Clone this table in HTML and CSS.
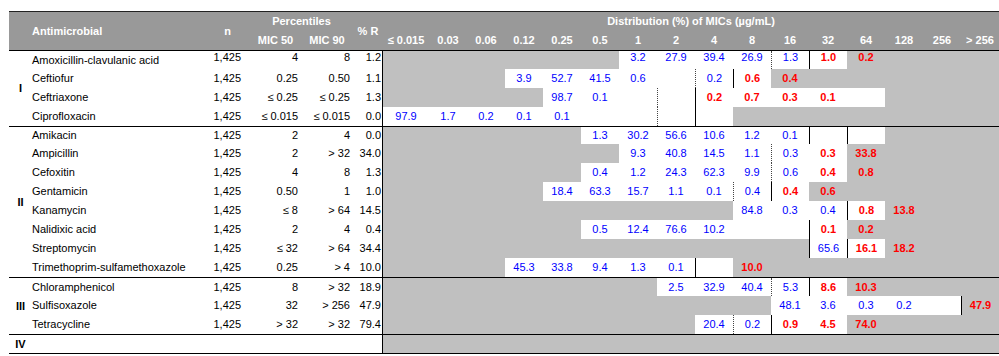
FILE: index.html
```html
<!DOCTYPE html>
<html lang="en">
<head>
<meta charset="utf-8">
<title>Distribution of MICs</title>
<link rel="stylesheet" href="styles.css">
</head>
<body>
<div class="table">
  <div class="head">
    <div class="hc h-grp"></div>
    <div class="hc h-anti">Antimicrobial</div>
    <div class="hc h-n">n</div>
    <div class="hc h-pct">Percentiles</div>
    <div class="hc h-r">% R</div>
    <div class="hc h-dist">Distribution (%) of MICs (µg/mL)</div>
    <div class="hc h-m50">MIC 50</div>
    <div class="hc h-m90">MIC 90</div>
    <div class="hc h-c0">≤ 0.015</div>
    <div class="hc">0.03</div>
    <div class="hc">0.06</div>
    <div class="hc">0.12</div>
    <div class="hc">0.25</div>
    <div class="hc">0.5</div>
    <div class="hc">1</div>
    <div class="hc">2</div>
    <div class="hc">4</div>
    <div class="hc">8</div>
    <div class="hc">16</div>
    <div class="hc">32</div>
    <div class="hc">64</div>
    <div class="hc">128</div>
    <div class="hc">256</div>
    <div class="hc">&gt; 256</div>
  </div>

  <div class="sec">
    <div class="grp">I</div>
    <div class="rows">
      <div class="row h18 top">
        <span class="name">Amoxicillin-clavulanic acid</span><span class="num n">1,425</span><span class="num m50">4</span><span class="num m90">8</span><span class="num pr">1.2</span>
        <span class="d s6"></span><span class="d w">3.2</span><span class="d w">27.9</span><span class="d w">39.4</span><span class="d w">26.9</span><span class="d w dl">1.3</span><span class="d w sl r">1.0</span><span class="d r">0.2</span><span class="d s3"></span>
      </div>
      <div class="row">
        <span class="name">Ceftiofur</span><span class="num n">1,425</span><span class="num m50">0.25</span><span class="num m90">0.50</span><span class="num pr">1.1</span>
        <span class="d s3"></span><span class="d w">3.9</span><span class="d w">52.7</span><span class="d w">41.5</span><span class="d w">0.6</span><span class="d w"></span><span class="d w dl">0.2</span><span class="d w sl r">0.6</span><span class="d r">0.4</span><span class="d s5"></span>
      </div>
      <div class="row">
        <span class="name">Ceftriaxone</span><span class="num n">1,425</span><span class="num m50">≤ 0.25</span><span class="num m90">≤ 0.25</span><span class="num pr">1.3</span>
        <span class="d s4"></span><span class="d w">98.7</span><span class="d w">0.1</span><span class="d w"></span><span class="d w dl"></span><span class="d w sl r">0.2</span><span class="d w r">0.7</span><span class="d w r">0.3</span><span class="d w r">0.1</span><span class="d w"></span><span class="d s3"></span>
      </div>
      <div class="row">
        <span class="name">Ciprofloxacin</span><span class="num n">1,425</span><span class="num m50">≤ 0.015</span><span class="num m90">≤ 0.015</span><span class="num pr">0.0</span>
        <span class="d w">97.9</span><span class="d w">1.7</span><span class="d w">0.2</span><span class="d w">0.1</span><span class="d w">0.1</span><span class="d w"></span><span class="d w"></span><span class="d w dl"></span><span class="d w sl"></span><span class="d s7"></span>
      </div>
    </div>
  </div>

  <div class="sec">
    <div class="grp">II</div>
    <div class="rows">
      <div class="row h17">
        <span class="name">Amikacin</span><span class="num n">1,425</span><span class="num m50">2</span><span class="num m90">4</span><span class="num pr">0.0</span>
        <span class="d s5"></span><span class="d w">1.3</span><span class="d w">30.2</span><span class="d w">56.6</span><span class="d w">10.6</span><span class="d w">1.2</span><span class="d w">0.1</span><span class="d w sl"></span><span class="d w sl"></span><span class="d s3"></span>
      </div>
      <div class="row">
        <span class="name">Ampicillin</span><span class="num n">1,425</span><span class="num m50">2</span><span class="num m90">&gt; 32</span><span class="num pr">34.0</span>
        <span class="d s6"></span><span class="d w">9.3</span><span class="d w">40.8</span><span class="d w">14.5</span><span class="d w">1.1</span><span class="d w dl">0.3</span><span class="d w r">0.3</span><span class="d r">33.8</span><span class="d s3"></span>
      </div>
      <div class="row">
        <span class="name">Cefoxitin</span><span class="num n">1,425</span><span class="num m50">4</span><span class="num m90">8</span><span class="num pr">1.3</span>
        <span class="d s5"></span><span class="d w">0.4</span><span class="d w">1.2</span><span class="d w">24.3</span><span class="d w">62.3</span><span class="d w">9.9</span><span class="d w dl">0.6</span><span class="d w r">0.4</span><span class="d r">0.8</span><span class="d s3"></span>
      </div>
      <div class="row">
        <span class="name">Gentamicin</span><span class="num n">1,425</span><span class="num m50">0.50</span><span class="num m90">1</span><span class="num pr">1.0</span>
        <span class="d s4"></span><span class="d w">18.4</span><span class="d w">63.3</span><span class="d w">15.7</span><span class="d w">1.1</span><span class="d w">0.1</span><span class="d w dl">0.4</span><span class="d w sl r">0.4</span><span class="d r">0.6</span><span class="d s4"></span>
      </div>
      <div class="row">
        <span class="name">Kanamycin</span><span class="num n">1,425</span><span class="num m50">≤ 8</span><span class="num m90">&gt; 64</span><span class="num pr">14.5</span>
        <span class="d s9"></span><span class="d w">84.8</span><span class="d w">0.3</span><span class="d w">0.4</span><span class="d w sl r">0.8</span><span class="d r">13.8</span><span class="d s2"></span>
      </div>
      <div class="row">
        <span class="name">Nalidixic acid</span><span class="num n">1,425</span><span class="num m50">2</span><span class="num m90">4</span><span class="num pr">0.4</span>
        <span class="d s5"></span><span class="d w">0.5</span><span class="d w">12.4</span><span class="d w">76.6</span><span class="d w">10.2</span><span class="d w"></span><span class="d w"></span><span class="d w sl r">0.1</span><span class="d r">0.2</span><span class="d s3"></span>
      </div>
      <div class="row">
        <span class="name">Streptomycin</span><span class="num n">1,425</span><span class="num m50">≤ 32</span><span class="num m90">&gt; 64</span><span class="num pr">34.4</span>
        <span class="d s11"></span><span class="d w sl">65.6</span><span class="d w sl r">16.1</span><span class="d r">18.2</span><span class="d s2"></span>
      </div>
      <div class="row">
        <span class="name">Trimethoprim-sulfamethoxazole</span><span class="num n">1,425</span><span class="num m50">0.25</span><span class="num m90">&gt; 4</span><span class="num pr">10.0</span>
        <span class="d s3"></span><span class="d w">45.3</span><span class="d w">33.8</span><span class="d w">9.4</span><span class="d w">1.3</span><span class="d w">0.1</span><span class="d w sl"></span><span class="d r">10.0</span><span class="d s6"></span>
      </div>
    </div>
  </div>

  <div class="sec">
    <div class="grp">III</div>
    <div class="rows">
      <div class="row h18">
        <span class="name">Chloramphenicol</span><span class="num n">1,425</span><span class="num m50">8</span><span class="num m90">&gt; 32</span><span class="num pr">18.9</span>
        <span class="d s7"></span><span class="d w">2.5</span><span class="d w">32.9</span><span class="d w">40.4</span><span class="d w dl">5.3</span><span class="d w sl r">8.6</span><span class="d r">10.3</span><span class="d s3"></span>
      </div>
      <div class="row">
        <span class="name">Sulfisoxazole</span><span class="num n">1,425</span><span class="num m50">32</span><span class="num m90">&gt; 256</span><span class="num pr">47.9</span>
        <span class="d s10"></span><span class="d w">48.1</span><span class="d w">3.6</span><span class="d w">0.3</span><span class="d w">0.2</span><span class="d w"></span><span class="d sl r">47.9</span>
      </div>
      <div class="row">
        <span class="name">Tetracycline</span><span class="num n">1,425</span><span class="num m50">&gt; 32</span><span class="num m90">&gt; 32</span><span class="num pr">79.4</span>
        <span class="d s8"></span><span class="d w">20.4</span><span class="d w dl">0.2</span><span class="d w sl r">0.9</span><span class="d w r">4.5</span><span class="d r">74.0</span><span class="d s3"></span>
      </div>
    </div>
  </div>

  <div class="sec">
    <div class="grp">IV</div>
    <div class="rows">
      <div class="row h18">
        <span class="name"></span><span class="num n"></span><span class="num m50"></span><span class="num m90"></span><span class="num pr"></span>
        <span class="d s16"></span>
      </div>
    </div>
  </div>
</div>
</body>
</html>
```

FILE: styles.css
```css
* {
  box-sizing: border-box;
  margin: 0;
  padding: 0;
}

body {
  margin: 0;
  background: #ffffff;
  font-family: "Liberation Sans", Arial, sans-serif;
  font-size: 11px;
  line-height: 13px;
  color: #000000;
}

.table {
  margin: 11px 0 0 9px;
  width: 990px;
}

/* ---------- header ---------- */
.head {
  display: grid;
  grid-template-columns: 23px 173px 45px 51px 52px 30px 46px repeat(15, 38px);
  grid-template-rows: 19px 19px;
  background: #999999;
  color: #ffffff;
  font-weight: bold;
  border-top: 1px solid #222222;
  border-bottom: 1px solid #000000;
}

.hc {
  display: flex;
  align-items: center;
  justify-content: center;
  white-space: nowrap;
}

.h-grp {
  grid-column: 1 / 2;
  grid-row: 1 / 3;
}

.h-anti {
  grid-column: 2 / 3;
  grid-row: 1 / 3;
  justify-content: flex-start;
}

.h-n {
  grid-column: 3 / 4;
  grid-row: 1 / 3;
}

.h-pct {
  grid-column: 4 / 6;
  grid-row: 1 / 2;
}

.h-r {
  grid-column: 6 / 7;
  grid-row: 1 / 3;
}

.h-dist {
  grid-column: 7 / 23;
  grid-row: 1 / 2;
}

.h-m50 {
  grid-column: 4 / 5;
  grid-row: 2 / 3;
}

.h-m90 {
  grid-column: 5 / 6;
  grid-row: 2 / 3;
}

.h-c0 {
  grid-column: 7 / 8;
  grid-row: 2 / 3;
}

/* ---------- body ---------- */
.sec {
  display: flex;
  border-bottom: 1px solid #000000;
}

.grp {
  width: 23px;
  flex: none;
  display: flex;
  align-items: center;
  justify-content: center;
  font-weight: bold;
}

.rows {
  width: 967px;
  flex: none;
}

.row {
  display: grid;
  grid-template-columns: 173px 45px 51px 52px 30px 46px repeat(15, 38px);
  height: 19px;
}

.row.h17 { height: 17px; }
.row.h18 { height: 18px; }

.row > span {
  display: flex;
  align-items: center;
  white-space: nowrap;
}

.name {
  justify-content: flex-start;
}

.num {
  justify-content: flex-end;
}

.num.n { padding-right: 9px; }
.num.m50 { padding-right: 3px; }
.num.m90 { padding-right: 3px; }
.num.pr {
  padding-right: 1px;
  border-right: 1px solid #000000;
}

.row.top > .num,
.row.top > .d {
  align-items: flex-start;
}

.d {
  background: #c0c0c0;
  color: #0000ff;
  justify-content: center;
}

.d.w { background: #ffffff; }

.d.r {
  color: #ff0000;
  font-weight: bold;
}

.d.dl { border-left: 1px dotted #444444; }
.d.sl { border-left: 1px solid #000000; }

.s2 { grid-column: span 2; }
.s3 { grid-column: span 3; }
.s4 { grid-column: span 4; }
.s5 { grid-column: span 5; }
.s6 { grid-column: span 6; }
.s7 { grid-column: span 7; }
.s8 { grid-column: span 8; }
.s9 { grid-column: span 9; }
.s10 { grid-column: span 10; }
.s11 { grid-column: span 11; }
.s16 { grid-column: span 16; }
```
